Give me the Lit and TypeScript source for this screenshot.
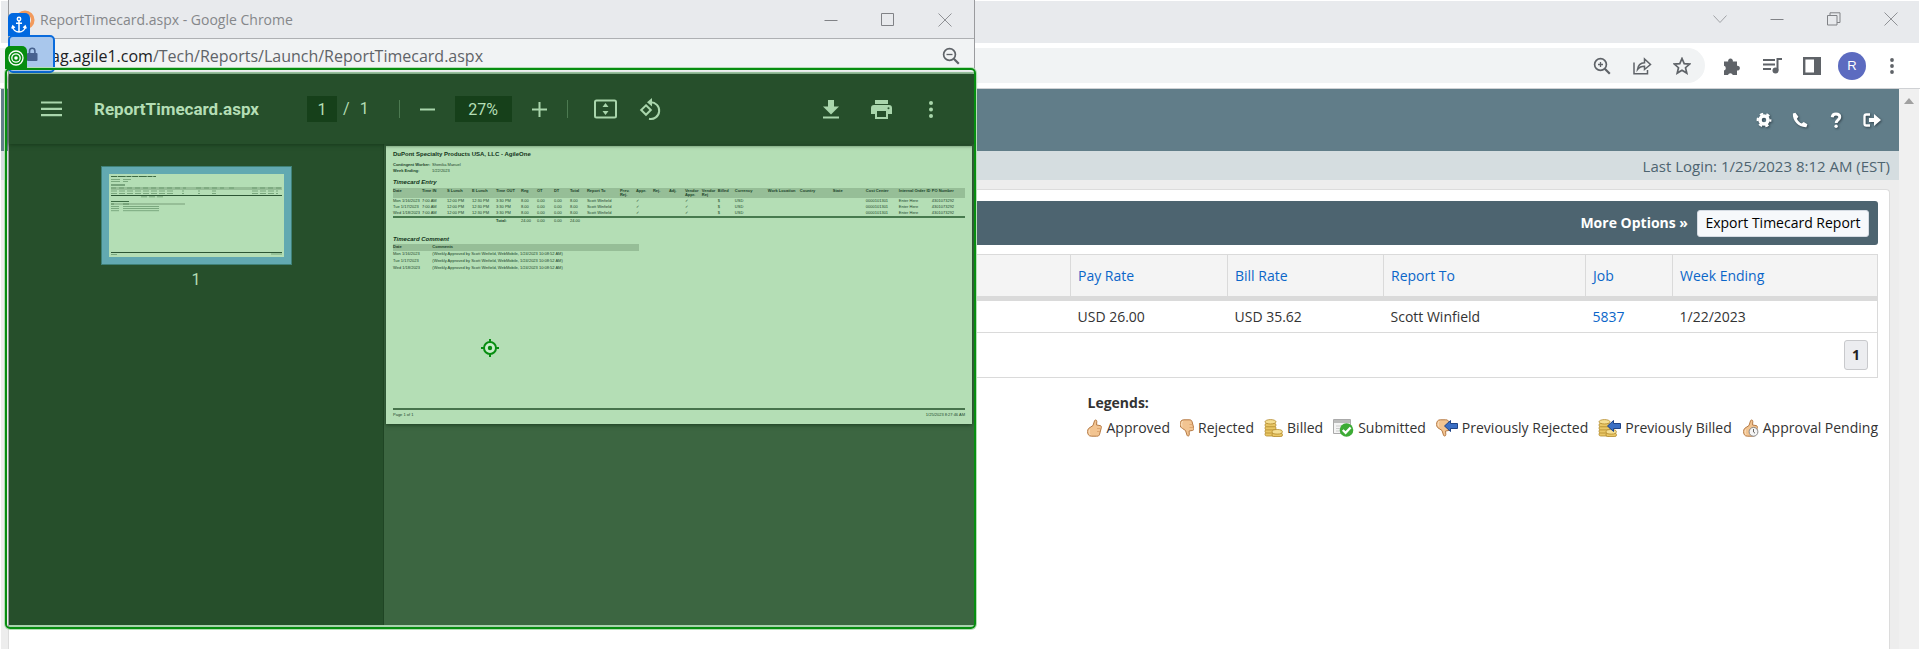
import { LitElement, html, css, svg, nothing } from "lit";
import { customElement } from "lit/decorators.js";

const UI = css`"Open Sans", "Noto Sans", sans-serif`;

const thumbUp = svg`<path d="M4 8.500 7 6.500 8.600 1.600c.3-1 2.200-.8 2.200.6L10.600 6l3.600.6c1.300.2 1.400 1.600 1 2.600l-1.600 6c-.4 1.600-1.300 2-3 2H5.400C2.500 17.200 1.500 15 1.600 12.500 1.700 10.200 2.500 9.300 4 8.500Z" fill="#f2c491" stroke="#b57a45"/><path d="M3.600 10.500c-.8 2-.5 4 .6 5.300" stroke="#fbe3c4" fill="none"/><path d="M11 9.500h3.500M11 12.500h3" stroke="#d9a068" stroke-width=".8"/>`;

const coins = svg`<g stroke="#b38a2c" stroke-width=".8" fill="#e9c766">
<rect x="1" y="13.500" width="11" height="3.500" rx="1.700"/><rect x="1" y="10.500" width="11" height="3.500" rx="1.700"/><rect x="1" y="7.400" width="11" height="3.500" rx="1.700"/><rect x="1" y="4.300" width="11" height="3.500" rx="1.700"/><ellipse cx="6.500" cy="2.800" rx="5.500" ry="2.200" fill="#f5df94"/>
<rect x="8" y="14.200" width="10.500" height="3.300" rx="1.600"/><ellipse cx="13.200" cy="12.800" rx="5.200" ry="2.300" fill="#f5df94"/></g>`;

const backArrow = svg`<path d="M8.500 7 14.500 1.500V4.500H21.500V9.500H14.500V12.500Z" fill="#3b6fc4" stroke="#1f4488"/>`;

const icons: Record<string, [number, number, unknown]> = {
  minimize: [14, 14, svg`<path d="M.5 7.500h13" stroke="#808286"/>`],
  maximize: [14, 14, svg`<path d="M.5 .5h12v12H.5z" stroke="#808286" fill="none"/>`],
  restore: [14, 14, svg`<path d="M.5 3.500h9.500v9.500H.5zM3 3.500V.8h10v9.700h-3" stroke="#808286" fill="none"/>`],
  close: [14, 14, svg`<path d="m.5 .5 13 13M13.500 .5l-13 13" stroke="#909296"/>`],
  chevron: [14, 14, svg`<path d="m.5 3.500 6.500 7 6.500-7" stroke="#a0a2a6" fill="none"/>`],
  zoomIn: [18, 18, svg`<g fill="none" stroke="#5f6368"><circle cx="7.500" cy="7.500" r="5.900" stroke-width="1.700"/><path d="m11.800 11.800 5 5" stroke-width="2.200"/><path d="M7.500 5v5M5 7.500h5" stroke-width="1.300"/></g>`],
  zoomOut: [18, 18, svg`<g fill="none" stroke="#5f6368"><circle cx="7.500" cy="7.500" r="5.900" stroke-width="1.700"/><path d="m11.800 11.800 5 5" stroke-width="2.200"/><path d="M4.500 7.500h6" stroke-width="1.300"/></g>`],
  share: [20, 18, svg`<g fill="none" stroke="#5f6368" stroke-width="1.500"><path d="M2 5.500V16.800h13.500V13"/><path d="M5.500 12.500c.5-4 3-6.500 7-6.700V2l6 5.500-6 5V9.300c-3 0-5.300 1-7 3.200Z"/></g>`],
  star: [18, 18, svg`<path d="m9 1.500 2.200 5.100 5.500.5-4.200 3.600 1.300 5.400L9 13.200l-4.800 2.900 1.300-5.400L1.300 7.100l5.500-.5Z" fill="none" stroke="#5f6368" stroke-width="1.700"/>`],
  puzzle: [18, 18, svg`<path d="M1 4.500h4.200a2.400 2.400 0 1 1 4.600 0H14v4.300a2.400 2.400 0 1 1 0 4.700V18H9.800a2.500 2.500 0 0 0-4.800 0H1v-4.400a2.500 2.500 0 0 0 0-4.800Z" fill="#5f6368"/>`],
  queue: [20, 18, svg`<g fill="none" stroke="#5f6368" stroke-width="2"><path d="M1 3h12M1 7.500h12M1 12h8"/><path d="M15.500 13.500V2H20"/></g><circle cx="13.500" cy="13.500" r="3" fill="#5f6368"/>`],
  panel: [18, 18, svg`<path d="M1.200 1.200h15.600v15.600H1.200z" fill="#fff" stroke="#5f6368" stroke-width="2.400"/><path d="M11 1h6v16h-6z" fill="#5f6368"/>`],
  dots: [6, 18, svg`<g fill="#5f6368"><circle cx="3" cy="3" r="1.900"/><circle cx="3" cy="9" r="1.900"/><circle cx="3" cy="15" r="1.900"/></g>`],
  gear: [16, 16, svg`<g fill="none" stroke="#fff"><circle cx="8" cy="8" r="4" stroke-width="3.500"/><circle cx="8" cy="8" r="6.300" stroke-width="2.200" stroke-dasharray="3.300 3.300" stroke-dashoffset="1.600"/></g>`],
  phone: [16, 16, svg`<path d="M3.400.8.900 1.600C.3 9 7 15.700 14.400 15.200l1-3-3.700-2.300-2 1.600C7.500 10.500 5.800 8.700 4.900 6.700l1.500-2Z" fill="#fff"/>`],
  help: [12, 16, svg`<path d="M2.200 5.200C2.500 2.800 4 2 6 2c2.300 0 3.800 1.200 3.800 3.100C9.800 7.800 6.200 7.800 6.200 11" fill="none" stroke="#fff" stroke-width="2.900"/><circle cx="6.100" cy="14.200" r="1.700" fill="#fff"/>`],
  logout: [18, 14, svg`<path d="M7 1.500H3.300c-1 0-1.800.7-1.800 1.800v7.400c0 1 .7 1.800 1.800 1.800H7" fill="none" stroke="#fff" stroke-width="2.300"/><path d="M6 5h5V1l7 6-7 6V9H6Z" fill="#fff"/>`],
  menu: [21, 16, svg`<path d="M0 1.500h21M0 7.800h21M0 14.200h21" stroke="#a9d6ac" stroke-width="2.200"/>`],
  minus: [15, 15, svg`<path d="M0 7.500h15" stroke="#a9d6ac" stroke-width="2"/>`],
  plus: [15, 15, svg`<path d="M0 7.500h15M7.500 0v15" stroke="#a9d6ac" stroke-width="2"/>`],
  fit: [23, 20, svg`<rect x="1" y="1.500" width="21" height="17" rx="1.500" fill="none" stroke="#a9d6ac" stroke-width="2"/><path d="m11.500 4 3 4h-6ZM11.500 16l3-4h-6Z" fill="#a9d6ac"/>`],
  rotate: [23, 23, svg`<g fill="none" stroke="#a9d6ac" stroke-width="2"><path d="M7 7.300 11.800 12 7 16.800 2.200 12Z"/><path d="M11.500 4.200a8.400 8.400 0 1 1-1.500 16.600"/></g><path d="m13 0-5 4.200 5 4.200Z" fill="#a9d6ac"/>`],
  download: [16, 19, svg`<path d="M5 0h6v6.500h5L8 14.500 0 6.500h5Z" fill="#a9d6ac"/><path d="M0 17.500h16" stroke="#a9d6ac" stroke-width="2"/>`],
  print: [21, 19, svg`<path d="M4 0h13v4H4zM3 5h15a3 3 0 0 1 3 3v6h-4v5H4v-5H0V8a3 3 0 0 1 3-3Z" fill="#a9d6ac"/><path d="M6 11h9v6H6z" fill="#264f2b"/><circle cx="17.500" cy="8.300" r="1" fill="#264f2b"/>`],
  kebab: [6, 19, svg`<g fill="#a9d6ac"><circle cx="3" cy="3" r="2"/><circle cx="3" cy="9.500" r="2"/><circle cx="3" cy="16" r="2"/></g>`],
  favicon: [20, 20, svg`<circle cx="10" cy="10" r="7.800" fill="none" stroke="#f29a5c" stroke-width="3.500"/>`],
  anchor: [16, 18, svg`<g fill="none" stroke="#fff" stroke-width="1.500"><circle cx="8" cy="3" r="1.700"/><path d="M8 4.800V16M5 7.300h6M1.700 10.500c.3 3.300 3 5.500 6.300 5.500s6-2.200 6.300-5.500M.8 12.500l1-2.500 2 1.800M15.200 12.500l-1-2.500-2 1.800"/></g>`],
  target: [16, 16, svg`<g fill="none" stroke="#fff" stroke-width="1.300"><circle cx="8" cy="8" r="7"/><circle cx="8" cy="8" r="4.200"/></g><circle cx="8" cy="8" r="1.800" fill="#fff"/>`],
  lock: [12, 15, svg`<rect x="1" y="6" width="10.500" height="8" rx="1" fill="#47628f"/><path d="M3.500 6V4a2.700 2.700 0 0 1 5.400 0v2" fill="none" stroke="#47628f" stroke-width="1.600"/>`],
  cross: [18, 18, svg`<circle cx="9" cy="9" r="6" fill="#c9ecca" stroke="#078d10" stroke-width="2"/><circle cx="9" cy="9" r="2.200" fill="#078d10"/><path d="M9 0v3M9 15v3M0 9h3M15 9h3" stroke="#078d10" stroke-width="2"/>`],
  approved: [16, 18, thumbUp],
  rejected: [14, 18, svg`<g transform="translate(-1.500 18) scale(1 -1)">${thumbUp}</g>`],
  billed: [19, 18, coins],
  submitted: [21, 18, svg`<path d="M.5 .5h17v14H.5z" fill="#f4f4f4" stroke="#aaa"/><path d="M1 1h16v3H1z" fill="#bbb"/><path d="M3 7h9M3 9.500h6M3 12h5" stroke="#ccc"/><circle cx="13.500" cy="11" r="6.800" fill="#3dab35"/><path d="m9.800 11 2.800 2.800 5-5.300" fill="none" stroke="#fff" stroke-width="2.300"/>`],
  prevRejected: [22, 18, svg`<g transform="translate(-1 18) scale(1 -1)">${thumbUp}</g>${backArrow}`],
  prevBilled: [23, 18, svg`${coins}<g transform="translate(1 0)">${backArrow}</g>`],
  pending: [17, 18, svg`${thumbUp}<circle cx="11.500" cy="12.800" r="4.400" fill="#f5f5f5" stroke="#888"/><path d="M11.500 10v3l1.500 1.200" fill="none" stroke="#666"/>`],
};

const icon = (name: string) => {
  const [w, h, body] = icons[name];
  return html`<svg width=${w} height=${h} viewBox="0 0 ${w} ${h}" aria-hidden="true">${body}</svg>`;
};

const iconButton = (name: string, label: string) =>
  html`<button class="icon" type="button" aria-label=${label}>${icon(name)}</button>`;

const base = css`
  * { box-sizing: border-box; }
  svg { display: block; flex: none; }
  button { font: inherit; color: inherit; }
  .icon {
    display: flex; align-items: center; justify-content: center;
    border: 0; padding: 0; margin: 0; background: none; flex: none;
  }
  a { color: #0b66c9; text-decoration: none; }
`;

@customElement("timecard-document")
class TimecardDocument extends LitElement {
  static styles = [base, css`
    :host {
      display: flex; flex-direction: column;
      background: #b4deb5; color: #20442a;
      padding: 4px 7px 7px; aspect-ratio: 586 / 278;
      font: 4px/6px "Liberation Sans", Arial, sans-serif;
      box-shadow: 0 1px 4px #1c3d20;
    }
    h1 { font-size: 6px; line-height: 8px; margin: 0 0 4px; color: #12331a; }
    h2 { font-size: 6px; line-height: 8px; margin: 0; font-style: italic; color: #12331a; }
    dl { display: grid; grid-template-columns: 39px 1fr; margin: 0 0 4px; }
    dt { font-weight: bold; }
    dd { margin: 0; }
    table { border-collapse: collapse; table-layout: fixed; width: 100%; text-align: left; }
    th, td { padding: 0; white-space: nowrap; vertical-align: top; }
    th { line-height: 4px; }
    thead { background: #96be97; }
    .entry { margin-top: 2px; }
    .entry thead th { height: 10px; padding-top: 1px; white-space: normal; }
    .entry thead th.one { white-space: nowrap; }
    .entry tbody td { height: 6px; }
    .entry tfoot { border-top: 2px solid #477a4e; }
    .total { font-weight: bold; }
    h2.second { margin-top: 11px; }
    .comments { width: 43%; margin-top: 1px; }
    .comments th { height: 7px; padding-top: 1px; }
    .comments td { height: 7px; }
    footer {
      display: flex; justify-content: space-between;
      margin-top: auto; border-top: 2px solid #47734c; padding-top: 2px; line-height: 5px;
    }
  `];

  private cols: [string, number][] = [
    ["Date", 29], ["Time IN", 25], ["S Lunch", 25], ["E Lunch", 24], ["Time OUT", 25], ["Reg", 16],
    ["OT", 17], ["DT", 16], ["Total", 17], ["Report To", 33], ["Prev. Rej.", 16], ["Appr.", 17],
    ["Rej.", 16], ["Adj.", 16], ["Vendor Appr.", 17], ["Vendor Rej", 16], ["Billed", 17],
    ["Currency", 33], ["Work Location", 32], ["Country", 33], ["State", 33], ["Cost Center", 33],
    ["Internal Order ID", 33], ["PO Number", 33],
  ];

  private days = ["Mon 1/16/2023", "Tue 1/17/2023", "Wed 1/18/2023"];

  render() {
    const wraps = new Set(["Prev. Rej.", "Vendor Appr.", "Vendor Rej"]);
    return html`
      <h1>DuPont Specialty Products USA, LLC - AgileOne</h1>
      <dl>
        <dt>Contingent Worker:</dt><dd>Shenika Manuel</dd>
        <dt>Week Ending:</dt><dd>1/22/2023</dd>
      </dl>
      <h2>Timecard Entry</h2>
      <table class="entry">
        <colgroup>${this.cols.map(([, w]) => html`<col style="width:${(w / 602) * 100}%">`)}</colgroup>
        <thead><tr>${this.cols.map(([n]) => html`<th class=${wraps.has(n) ? "" : "one"}>${n}</th>`)}</tr></thead>
        <tbody>${this.days.map((d) => html`<tr>${[
          d, "7:00 AM", "12:00 PM", "12:30 PM", "3:30 PM", "8.00", "0.00", "0.00", "8.00",
          "Scott Winfield", "", "✓", "", "", "✓", "", "$", "USD", "", "", "", "0000101301",
          "Enter Here", "4301073292",
        ].map((c) => html`<td>${c || nothing}</td>`)}</tr>`)}</tbody>
        <tfoot><tr><td colspan="4"></td><td class="total">Total:</td><td>24.00</td><td>0.00</td><td>0.00</td><td>24.00</td><td colspan="15"></td></tr></tfoot>
      </table>
      <h2 class="second">Timecard Comment</h2>
      <table class="comments">
        <colgroup><col style="width:16%"><col></colgroup>
        <thead><tr><th>Date</th><th>Comments</th></tr></thead>
        <tbody>${this.days.map((d) => html`<tr><td>${d}</td><td>(Weekly Approved by Scott Winfield, WebMobile, 1/24/2023 10:08:52 AM)</td></tr>`)}</tbody>
      </table>
      <footer><span>Page 1 of 1</span><span>1/25/2023 8:27:46 AM</span></footer>
    `;
  }
}

@customElement("report-window")
class ReportWindow extends LitElement {
  static styles = [base, css`
    :host {
      display: flex; flex-direction: column;
      border: solid #9a9b9e; border-width: 0 1px;
      background: #f1f3f4; font-family: ${UI};
    }
    .title {
      display: flex; align-items: center; height: 39px; flex: none;
      background: #e8eaed; border-bottom: 1px solid #aeb0b3;
      padding: 1px 1px 0 6px; font-size: 14px; color: #85878a;
    }
    .title span { margin-left: 5px; flex: 1; }
    .title .icon { width: 57px; height: 37px; }
    .address {
      display: flex; align-items: center; height: 33px; flex: none;
      padding: 0 14px 0 42px; font-size: 16px; color: #5f6368;
    }
    .address span { flex: 1; }
    .address b { font-weight: normal; color: #202124; }
    .viewer {
      position: relative; flex: 1; min-height: 0; display: flex; flex-direction: column;
      border: solid #a9d2ae; border-width: 2px 0;
      background: #264f2b; color: #b4deb5; font-family: Roboto, sans-serif;
    }
    .tools {
      display: flex; align-items: center; height: 70px; flex: none;
      padding: 0 18px 0 32px; box-shadow: 0 1px 4px #173a1b; z-index: 1;
    }
    h1 { font-size: 17px; font-weight: 700; margin: 0 48px 0 32px; }
    .field {
      background: #16401a; color: inherit; border: 0; padding: 0; height: 26px;
      font: 16px Roboto, sans-serif; text-align: center; border-radius: 0;
    }
    .page { width: 30px; }
    .zoom { width: 57px; }
    .slash { margin: 0 30px 0 6px; font-size: 16px; }
    .slash i { font-style: normal; margin-left: 10px; }
    .sep { width: 1px; height: 18px; background: #4c7a51; }
    .pair { display: flex; align-items: center; gap: 20px; margin: 0 20px; }
    .actions { display: flex; align-items: center; gap: 22px; margin-left: 26px; }
    .end { display: flex; margin-left: auto; }
    .end .icon { width: 50px; height: 26px; }
    .body { display: flex; flex: 1; min-height: 0; }
    .side {
      width: 375px; flex: none; display: flex; flex-direction: column; align-items: center;
      padding-top: 22px; font-size: 16px; border-right: 1px solid #1f4524;
    }
    .thumb { width: 191px; background: #62a9b1; padding: 8px; margin-bottom: 5px; outline: 1px solid #3f8177; outline-offset: -1px; }
    .thumb svg { width: 100%; height: auto; }
    .canvas { flex: 1; min-width: 0; background: #3c6641; padding: 2px 2px 0 2px; }
    .frame {
      position: absolute; inset: -6px -2px -4px -4px;
      border: 2px solid #078d10; border-radius: 5px; z-index: 2;
      box-shadow: 0 0 0 1px #b5deb6;
      pointer-events: none;
    }
    .cross { position: absolute; left: 472px; top: 265px; z-index: 3; }
    .lock, .tag { position: absolute; display: flex; align-items: center; justify-content: center; }
    .lock {
      left: -1px; top: 35px; width: 47px; height: 38px;
      background: #a9c7ec; border: 2px solid #0a6bdc; border-radius: 5px;
    }
    .tag { width: 22px; height: 23px; border-radius: 5px 5px 0 0; z-index: 4; }
    .tag.blue { left: -1px; top: 13px; background: #0068e0; }
    .tag.green { left: -4px; top: 46px; background: #078d10; }
  `];

  render() {
    return html`
      <div class="title">
        ${icon("favicon")}<span>ReportTimecard.aspx - Google Chrome</span>
        ${iconButton("minimize", "Minimize")}${iconButton("maximize", "Maximize")}${iconButton("close", "Close")}
      </div>
      <div class="address">
        <span><b>ag.agile1.com</b>/Tech/Reports/Launch/ReportTimecard.aspx</span>
        ${iconButton("zoomOut", "Zoom")}
      </div>
      <div class="viewer">
        <div class="tools">
          ${iconButton("menu", "Menu")}
          <h1>ReportTimecard.aspx</h1>
          <input class="field page" aria-label="Page number" value="1">
          <span class="slash">/<i>1</i></span>
          <span class="sep"></span>
          <div class="pair">
            ${iconButton("minus", "Zoom out")}
            <input class="field zoom" aria-label="Zoom level" value="27%">
            ${iconButton("plus", "Zoom in")}
          </div>
          <span class="sep"></span>
          <div class="actions">${iconButton("fit", "Fit to page")}${iconButton("rotate", "Rotate")}</div>
          <div class="end">${iconButton("download", "Download")}${iconButton("print", "Print")}${iconButton("kebab", "More actions")}</div>
        </div>
        <div class="body">
          <div class="side">
            <div class="thumb">${this.thumbnail()}</div>
            <span>1</span>
          </div>
          <div class="canvas"><timecard-document></timecard-document></div>
        </div>
        <div class="frame"></div>
        <div class="cross">${icon("cross")}</div>
      </div>
      <div class="lock">${icon("lock")}</div>
      <div class="tag blue">${icon("anchor")}</div>
      <div class="tag green">${icon("target")}</div>
    `;
  }

  private thumbnail() {
    return html`<svg viewBox="0 0 175 83" aria-hidden="true">
      <path d="M0 0h175v83H0z" fill="#b4deb5"/>
      <path d="M2 13h171v3H2zM2 29h74v2H2z" fill="#96be97"/>
      <g fill="none" stroke="#3d6a44">
        <path d="M2 2.500h45" stroke-width="1.200" stroke-dasharray="6 .7 8 .7 5 .7"/>
        <path d="M2 11h14M2 27.500h18"/>
        <path d="M2 21.500h171M2 78.500h171" stroke="#2c5534"/>
      </g>
      <g fill="none" stroke="#6b9a70" stroke-width=".8">
        <path d="M2 5.500h20M2 7.500h17" stroke-dasharray="9 3"/>
        <path d="M2 14h75M87 14h28M120 14h8M143 14h29" stroke="#5f8f65" stroke-dasharray="5 3"/>
        <path d="M2 17h64M2 19.500h64M32 22.800h24M73 17h2M73 19.500h2M89 17h2M89 19.500h2M103 17h4M103 19.500h4M143 17h26M143 19.500h26" stroke-dasharray="6 2"/>
        <path d="M2 30h3M14 30h6" stroke="#4e7d54"/>
        <path d="M2 32.500h8M14 32.500h36M2 34.500h8M14 34.500h36M2 36.700h8M14 36.700h36"/>
        <path d="M2 80.500h6M162 80h11"/>
      </g>
    </svg>`;
  }
}

@customElement("app-root")
class AppRoot extends LitElement {
  static styles = [base, css`
    :host {
      display: flex; flex-direction: column; position: relative;
      height: 100vh; overflow: hidden; background: #fff;
      font: 14px/20px ${UI}; color: #333;
    }
    .titlebar { display: flex; justify-content: flex-end; height: 42px; flex: none; margin: 1px 1px 0; background: #e8eaed; }
    .titlebar .icon { width: 57px; height: 35px; }
    .toolbar { display: flex; align-items: center; height: 46px; flex: none; border-bottom: 1px solid #cfd1d4; padding: 0 8px 0 0; }
    .omnibox { display: flex; flex: 1; justify-content: flex-end; height: 35px; background: #f1f3f4; border-radius: 0 18px 18px 0; margin-right: 7px; padding-right: 3px; }
    .toolbar .icon { width: 40px; height: 35px; }
    .avatar { width: 28px; height: 28px; border-radius: 50%; background: #5c6bc0; color: #fff; font: 13px/28px "Liberation Sans", Arial, sans-serif; text-align: center; }
    .view { display: flex; flex: 1; min-height: 0; margin: 0 1px; }
    .scroll { width: 20px; background: #f0f0f0; padding: 9px 5px; }
    .site { flex: 1; display: flex; flex-direction: column; background: #ededed; }
    .banner { height: 62px; flex: none; background: #617d89; display: flex; justify-content: flex-end; align-items: center; padding-right: 9px; }
    .banner .icon { width: 36px; filter: drop-shadow(1px 1px 1px #33454e); }
    .login { height: 29px; flex: none; background: #d5dde0; color: #4e6470; text-align: right; padding-right: 9px; font-size: 15px; line-height: 30px; }
    .card { flex: 1; margin: 9px 9px 0 7px; background: #fff; border: 1px solid #dcdcdc; border-bottom: 0; border-radius: 4px 4px 0 0; padding: 11px; }
    .bar { display: flex; align-items: center; justify-content: flex-end; gap: 9px; height: 44px; background: #4d6470; border-radius: 3px; padding-right: 9px; color: #fff; font-weight: bold; margin-bottom: 9px; }
    .export { background: #f6f8fb; border: 1px solid #d5dbe3; border-radius: 3px; height: 27px; width: 172px; padding: 0; color: #000; font-weight: normal; white-space: nowrap; }
    table { border-collapse: collapse; table-layout: fixed; width: 100%; border: 1px solid #dadada; }
    th, td { padding: 0 7px; text-align: left; font-weight: normal; white-space: nowrap; }
    th { height: 44px; background: #f4f4f4; border: 1px solid #dadada; }
    thead { border-bottom: 5px solid #dadada; }
    tbody td { height: 34px; }
    tfoot td { height: 45px; border-top: 1px solid #dadada; padding-right: 9px; }
    .pager { display: block; margin-left: auto; width: 24px; height: 30px; border: 1px solid #c8c9cc; border-radius: 3px; background: #ecedf0; font-weight: bold; padding: 0; color: #222; }
    .legend { width: fit-content; margin: 14px 0 0 auto; }
    .legend h2 { font-size: 14px; line-height: 22px; margin: 0 0 2px 1px; }
    .legend ul { display: flex; gap: 10px; list-style: none; margin: 0; padding: 0; }
    .legend li { display: flex; align-items: center; gap: 4px; height: 24px; white-space: nowrap; }
    report-window { position: absolute; left: 8px; top: 0; width: calc(50vw + 7px); height: calc(100vh - 22px); }
  `];

  private legend: [string, string][] = [
    ["approved", "Approved"], ["rejected", "Rejected"], ["billed", "Billed"], ["submitted", "Submitted"],
    ["prevRejected", "Previously Rejected"], ["prevBilled", "Previously Billed"], ["pending", "Approval Pending"],
  ];

  render() {
    return html`
      <div class="titlebar">
        ${iconButton("chevron", "Search tabs")}${iconButton("minimize", "Minimize")}
        ${iconButton("restore", "Restore")}${iconButton("close", "Close")}
      </div>
      <div class="toolbar">
        <div class="omnibox">
          ${iconButton("zoomIn", "Zoom")}${iconButton("share", "Share")}${iconButton("star", "Bookmark")}
        </div>
        ${iconButton("puzzle", "Extensions")}${iconButton("queue", "Media")}${iconButton("panel", "Side panel")}
        <button class="icon" type="button" aria-label="Profile"><span class="avatar">R</span></button>
        ${iconButton("dots", "Chrome menu")}
      </div>
      <div class="view">
        <div class="site">
          <header class="banner">
            ${iconButton("gear", "Settings")}${iconButton("phone", "Contact")}${iconButton("help", "Help")}${iconButton("logout", "Log out")}
          </header>
          <div class="login">Last Login: 1/25/2023 8:12 AM (EST)</div>
          <main class="card">
            <div class="bar"><span>More Options »</span><button class="export" type="button">Export Timecard Report</button></div>
            <table>
              <colgroup><col><col style="width:157px"><col style="width:156px"><col style="width:202px"><col style="width:87px"><col style="width:205px"></colgroup>
              <thead><tr>
                <th></th><th><a href="#">Pay Rate</a></th><th><a href="#">Bill Rate</a></th>
                <th><a href="#">Report To</a></th><th><a href="#">Job</a></th><th><a href="#">Week Ending</a></th>
              </tr></thead>
              <tbody><tr>
                <td></td><td>USD 26.00</td><td>USD 35.62</td><td>Scott Winfield</td>
                <td><a href="#">5837</a></td><td>1/22/2023</td>
              </tr></tbody>
              <tfoot><tr><td colspan="6"><button class="pager" type="button">1</button></td></tr></tfoot>
            </table>
            <section class="legend">
              <h2>Legends:</h2>
              <ul>${this.legend.map(([i, t]) => html`<li>${icon(i)}<span>${t}</span></li>`)}</ul>
            </section>
          </main>
        </div>
        <div class="scroll"><svg width="10" height="6"><path d="M0 6 5 0l5 6Z" fill="#a0a0a0"/></svg></div>
      </div>
      <report-window></report-window>
    `;
  }
}
